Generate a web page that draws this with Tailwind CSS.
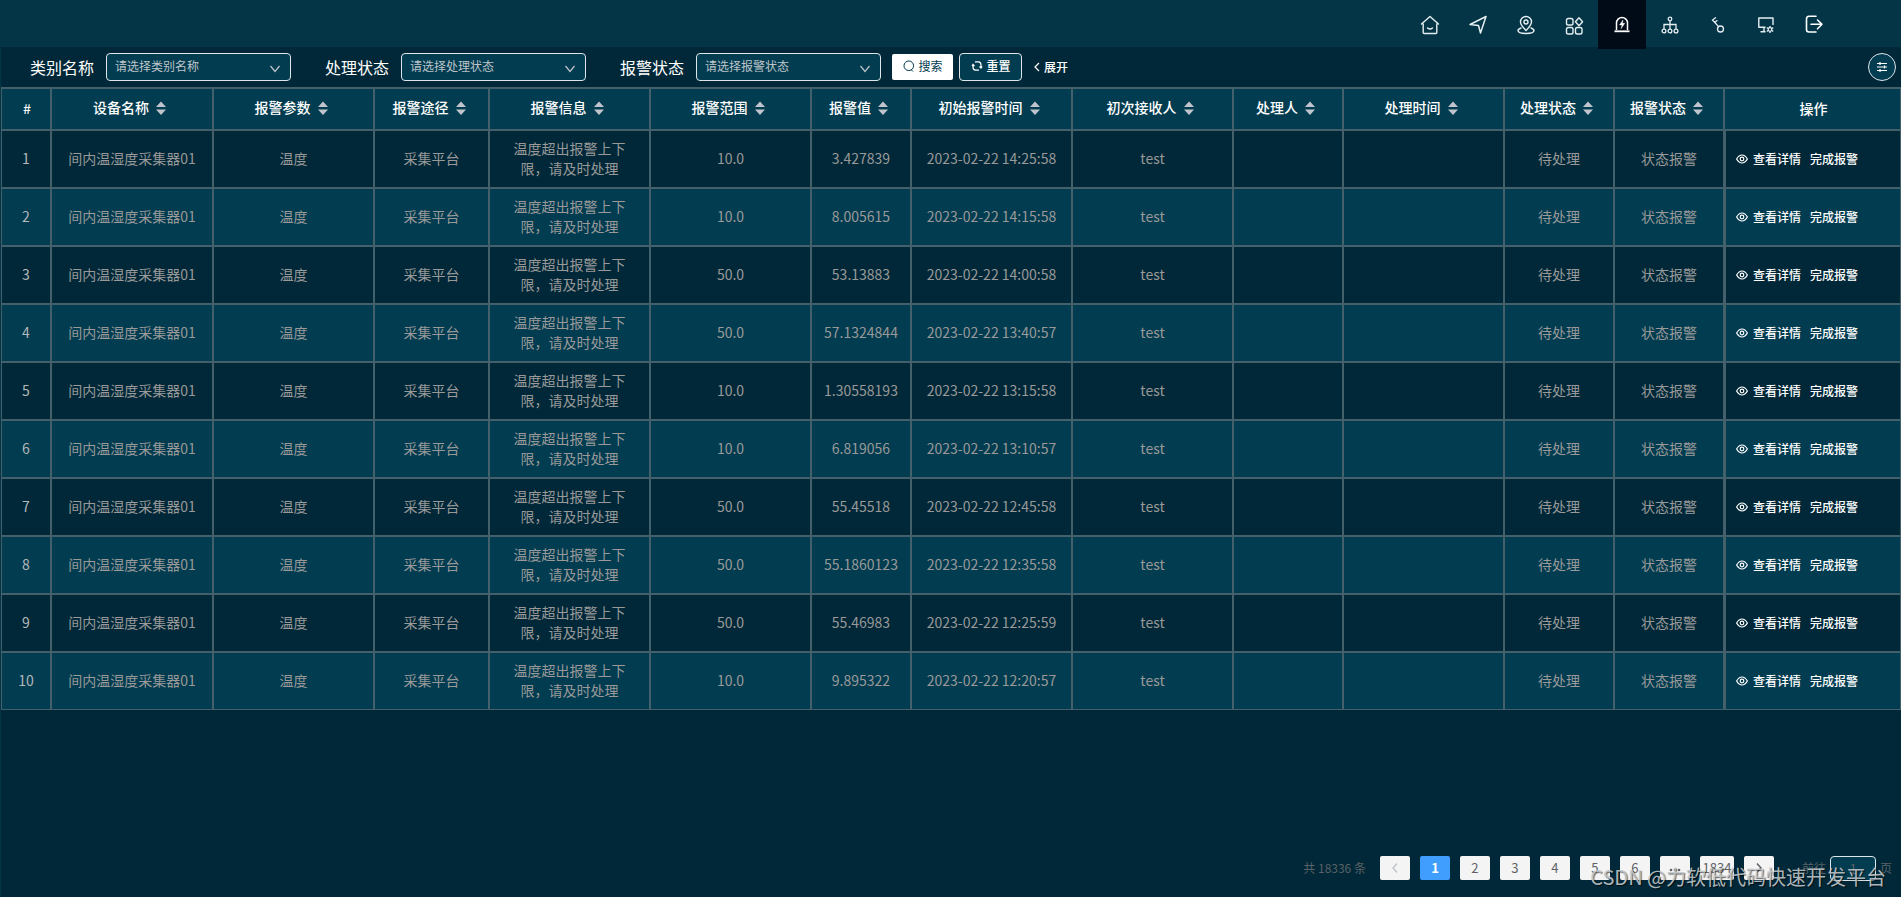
<!DOCTYPE html>
<html lang="zh-CN">
<head>
<meta charset="utf-8">
<title>报警管理</title>
<script src="https://cdn.jsdelivr.net/npm/@tailwindcss/browser@4"></script>
</head>
<body class="flex min-h-screen flex-col bg-[#002838] font-['Noto_Sans_CJK_SC',sans-serif] text-sm text-white">

<header class="flex h-[47px] shrink-0 justify-end bg-[#033547] pr-[63px]">
  <nav class="flex h-[49px]" aria-label="主导航">
    <a href="#" aria-label="首页" class="flex w-12 items-center justify-center"><svg class="size-5" viewBox="0 0 20 20" fill="none" stroke="#e6eef1" stroke-width="1.4" stroke-linejoin="round" stroke-linecap="round"><path d="M3.200 9v8.500q0 1 1 1h11.600q1 0 1-1V9M1.500 9 10 1.500 18.500 9M7.500 13q2.500 2 5 0"/></svg></a>
    <a href="#" aria-label="导航" class="flex w-12 items-center justify-center"><svg class="size-5" viewBox="0 0 20 20" fill="none" stroke="#e6eef1" stroke-width="1.5" stroke-linejoin="round"><path d="M18 1.500 2 9.500l8.500 1L12.500 18z"/></svg></a>
    <a href="#" aria-label="位置" class="flex w-12 items-center justify-center"><svg class="size-5" viewBox="0 0 20 20" fill="none" stroke="#e6eef1" stroke-width="1.4" stroke-linejoin="round" stroke-linecap="round"><path d="M10 15.500C7 12.500 4.500 10 4.500 7a5.500 5.500 0 0 1 11 0c0 3-2.500 5.500-5.500 8.500z"/><circle cx="10" cy="7" r="2"/><path d="M5 13c-2 .7-3 1.600-3 2.600C2 17.300 5.500 18.500 10 18.500s8-1.200 8-2.900c0-1-1-1.900-3-2.600"/></svg></a>
    <a href="#" aria-label="应用" class="flex w-12 items-center justify-center"><svg class="size-5" viewBox="0 0 20 20" fill="none" stroke="#e6eef1" stroke-width="1.4" stroke-linejoin="round"><rect x="2.500" y="3.500" width="6.500" height="6.500" rx="1.800"/><path d="m15 2.700 3.600 4-3.600 4-3.600-4z"/><rect x="2.500" y="12.500" width="6.500" height="6.500" rx="1.800"/><rect x="11.500" y="12.500" width="6.500" height="6.500" rx="1.800"/></svg></a>
    <a href="#" aria-label="报警" aria-current="page" class="flex w-12 items-center justify-center bg-[#000b17]"><svg class="size-5" viewBox="0 0 20 20" fill="none" stroke="#fff" stroke-width="1.500"><path d="M4.500 15V8a5.500 5.500 0 0 1 11 0v7"/><path d="M2.500 16.300h15" stroke-width="1.800"/><path d="M11 5 7.500 9.900H10L9 13.800l3.800-5.500h-2.300z" fill="#fff" stroke-width=".4"/></svg></a>
    <a href="#" aria-label="组织" class="flex w-12 items-center justify-center"><svg class="size-5" viewBox="0 0 20 20" fill="none" stroke="#e6eef1" stroke-width="1.300"><circle cx="10" cy="4" r="1.800"/><circle cx="4" cy="16" r="1.900"/><circle cx="10" cy="16" r="1.900"/><circle cx="16" cy="16" r="1.900"/><path d="M10 6v8M4 14V9.500h12V14"/></svg></a>
    <a href="#" aria-label="权限" class="flex w-12 items-center justify-center"><svg class="size-5" viewBox="0 0 20 20" fill="none" stroke="#e6eef1" stroke-width="1.300" stroke-linecap="round"><circle cx="12.500" cy="14" r="3"/><path d="M10.600 11.600 4.500 5 7.500 2.700M6.800 7.400l2.200-1.800"/></svg></a>
    <a href="#" aria-label="系统设置" class="flex w-12 items-center justify-center"><svg class="size-5" viewBox="0 0 20 20" fill="none" stroke="#e6eef1" stroke-width="1.400" stroke-linejoin="round"><path d="M17 10V3H2.800v9.200h6.700M8 12.500v4M4.500 16.800h5"/><circle cx="14" cy="14.500" r="1.800" stroke-width="1.200"/><path d="M14 11v1.500M14 16.500V18M10.800 12.700l1.300.8M15.900 15.500l1.300.8M10.800 16.300l1.300-.8M15.900 13.500l1.300-.8"/></svg></a>
    <a href="#" aria-label="退出" class="flex w-12 items-center justify-center"><svg class="size-5" viewBox="0 0 20 20" fill="none" stroke="#fff" stroke-width="1.600" stroke-linejoin="round" stroke-linecap="round"><path d="M12 1.300H5Q2.500 1.300 2.500 4v10.500q0 2.500 2.500 2.500h7M7 9.300h11M13.500 5l4.500 4.300-4.500 4.500"/></svg></a>
  </nav>
</header>

<main class="flex grow flex-col border-l border-[#033547]">
  <form class="flex h-10 shrink-0 items-center pr-[5px] pb-px pl-[29px]">
    <label for="category" class="text-base">类别名称</label>
    <span class="relative ml-3 h-7 w-[185px]">
      <select id="category" class="size-full appearance-none rounded border border-[#dfe6e9] bg-[#023c50] px-2 pb-px text-xs text-[#bdc5ca]"><option>请选择类别名称</option></select>
      <svg class="pointer-events-none absolute top-2.5 right-2.5 size-3" viewBox="0 0 12 12" fill="none" stroke="#c0c4cc" stroke-width="1.200"><path d="M1.500 3 6 8.500 10.500 3"/></svg>
    </span>
    <label for="handle" class="ml-[34px] text-base">处理状态</label>
    <span class="relative ml-3 h-7 w-[185px]">
      <select id="handle" class="size-full appearance-none rounded border border-[#dfe6e9] bg-[#023c50] px-2 pb-px text-xs text-[#bdc5ca]"><option>请选择处理状态</option></select>
      <svg class="pointer-events-none absolute top-2.5 right-2.5 size-3" viewBox="0 0 12 12" fill="none" stroke="#c0c4cc" stroke-width="1.200"><path d="M1.500 3 6 8.500 10.500 3"/></svg>
    </span>
    <label for="alarm" class="ml-[34px] text-base">报警状态</label>
    <span class="relative ml-3 h-7 w-[185px]">
      <select id="alarm" class="size-full appearance-none rounded border border-[#dfe6e9] bg-[#023c50] px-2 pb-px text-xs text-[#bdc5ca]"><option>请选择报警状态</option></select>
      <svg class="pointer-events-none absolute top-2.5 right-2.5 size-3" viewBox="0 0 12 12" fill="none" stroke="#c0c4cc" stroke-width="1.200"><path d="M1.500 3 6 8.500 10.500 3"/></svg>
    </span>
    <button type="button" class="ml-[11px] flex h-[26px] w-[61px] items-center justify-center gap-1 rounded-xs bg-white pb-px text-xs text-[#023c50]"><svg class="size-3" viewBox="0 0 12 12" fill="none" stroke="currentColor"><circle cx="5.800" cy="5.800" r="4.800"/><path d="m8 9.500 2 2"/></svg>搜索</button>
    <button type="reset" class="ml-1.5 flex h-7 w-[63px] items-center justify-center gap-1 rounded border border-[#dfe6e9] bg-[#023c50] pb-px text-xs font-medium"><svg class="size-3" viewBox="0 0 12 12" fill="none" stroke="currentColor" stroke-width="1.200"><path d="M4 1.800h3.500Q10 2 10 5v2.500M8 10.200H4.500Q2 10 2 7V4.500M1 6l1-1.500L3.500 6M8.500 6.500 10 8l1.200-1.500"/></svg>重置</button>
    <button type="button" class="ml-3 flex items-center gap-1 text-xs font-medium"><svg class="h-3 w-1.5" viewBox="0 0 6 12" fill="none" stroke="currentColor" stroke-width="1.200"><path d="M5 2 1 6l4 4"/></svg>展开</button>
    <button type="button" aria-label="列设置" class="ml-auto flex size-7 items-center justify-center rounded-full border border-[#dfe6e9] bg-[#023c50]"><svg class="size-3" viewBox="0 0 12 12" fill="none" stroke="#fff" stroke-width="1.200"><path d="M1 2.500h10M1 6h10M1 9.500h10M4 1v3M8.500 4.500v3M4 8v3"/></svg></button>
  </form>

  <table class="w-full table-fixed border-separate border-spacing-0 border-t border-[#43606b] text-center">
    <colgroup>
      <col class="w-[50px]"><col class="w-[162px]"><col class="w-[161px]"><col class="w-[115px]"><col class="w-[161px]"><col class="w-[161px]"><col class="w-[100px]"><col class="w-[161px]"><col class="w-[161px]"><col class="w-[110px]"><col class="w-[161px]"><col class="w-[110px]"><col class="w-[110px]"><col class="w-[177px]">
    </colgroup>
    <thead><tr id="head" class="h-[42px] bg-[#023c50]"></tr></thead>
    <tbody id="rows" class="text-[#999999]"></tbody>
  </table>

  <nav class="mt-auto mb-[17px] flex h-6 items-center justify-end pr-[9px] text-xs text-[#5a6267]" aria-label="分页">
    <span class="mr-3.5">共 18336 条</span>
    <div class="flex gap-2.5 text-[13px] text-[#606266]">
      <button type="button" aria-label="上一页" class="flex h-6 w-[30px] items-center justify-center rounded-xs bg-[#f4f4f5]"><svg class="size-3" viewBox="0 0 12 12" fill="none" stroke="#c0c4cc" stroke-width="1.500"><path d="M8 1.500 4 6l4 4.500"/></svg></button>
      <button type="button" aria-current="page" class="h-6 w-[30px] rounded-xs bg-[#409eff] font-bold text-white">1</button>
      <button type="button" class="h-6 w-[30px] rounded-xs bg-[#f4f4f5]">2</button>
      <button type="button" class="h-6 w-[30px] rounded-xs bg-[#f4f4f5]">3</button>
      <button type="button" class="h-6 w-[30px] rounded-xs bg-[#f4f4f5]">4</button>
      <button type="button" class="h-6 w-[30px] rounded-xs bg-[#f4f4f5]">5</button>
      <button type="button" class="h-6 w-[30px] rounded-xs bg-[#f4f4f5]">6</button>
      <button type="button" aria-label="向后 5 页" class="flex h-6 w-[30px] items-center justify-center rounded-xs bg-[#f4f4f5]"><svg class="size-3" viewBox="0 0 12 12" fill="#606266"><circle cx="2" cy="8" r="1.300"/><circle cx="6" cy="8" r="1.300"/><circle cx="10" cy="8" r="1.300"/></svg></button>
      <button type="button" class="h-6 w-[34px] rounded-xs bg-[#f4f4f5]">1834</button>
      <button type="button" aria-label="下一页" class="flex h-6 w-[30px] items-center justify-center rounded-xs bg-[#f4f4f5]"><svg class="size-3" viewBox="0 0 12 12" fill="none" stroke="#606266" stroke-width="1.500"><path d="m4 1.500 4 4.500-4 4.500"/></svg></button>
    </div>
    <label for="page" class="mr-1 ml-7">前往</label>
    <input id="page" value="1" class="mr-1 h-[25px] w-[46px] rounded border border-[#dfe6e9] bg-[#023c50] text-center text-[13px]">
    <span>页</span>
  </nav>
</main>

<div class="pointer-events-none absolute right-[15px] bottom-1 text-xl leading-8 text-[#c3c9cc]/90 [text-shadow:1px_1px_1px_rgba(0,0,0,0.600)]">CSDN @力软低代码快速开发平台</div>

<template id="sort"><svg class="ml-1.5 inline-block h-4 w-3 align-[-3px]" viewBox="0 0 12 16" fill="#c0c4cc"><path d="M6 1.500 11 7H1zM1 9.500h10L6 15z"/></svg></template>
<template id="eye"><svg class="h-3 w-3" viewBox="0 0 12 12" fill="none" stroke="#fff" stroke-width="1.200"><path d="M.6 6Q3 2 6 2T11.400 6Q9 10 6 10T.6 6z"/><circle cx="6" cy="6" r="1.800"/></svg></template>

<script>
const sort = document.getElementById('sort').innerHTML;
const eye = document.getElementById('eye').innerHTML;
const heads = ['#','设备名称','报警参数','报警途径','报警信息','报警范围','报警值','初始报警时间','初次接收人','处理人','处理时间','处理状态','报警状态','操作'];
const data = [
  ['10.0','3.427839','14:25:58'],
  ['10.0','8.005615','14:15:58'],
  ['50.0','53.13883','14:00:58'],
  ['50.0','57.1324844','13:40:57'],
  ['10.0','1.30558193','13:15:58'],
  ['10.0','6.819056','13:10:57'],
  ['50.0','55.45518','12:45:58'],
  ['50.0','55.1860123','12:35:58'],
  ['50.0','55.46983','12:25:59'],
  ['10.0','9.895322','12:20:57'],
];
document.getElementById('head').innerHTML = heads.map((h, i) =>
  `<th scope="col" class="border border-[#43606b] font-medium ${i > 0 && i < 13 ? 'pr-1 pb-1' : 'pl-0.5 pb-0.5'}">${h}${i > 0 && i < 13 ? sort : ''}</th>`).join('');
document.getElementById('rows').innerHTML = data.map(([range, value, time], i) => {
  const cells = [i + 1, '间内温湿度采集器01', '温度', '采集平台', '温度超出报警上下限，请及时处理', range, value, '2023-02-22 ' + time, 'test', '', '', '待处理', '状态报警'];
  return `<tr class="h-[58px] ${i % 2 ? 'bg-[#023c50]' : 'bg-[#002838]'}">` +
    cells.map((c, k) => `<td class="border border-[#43606b] pb-0.5 ${k === 4 ? 'px-5' : ''} ${k === 0 ? 'text-[#b3b8ba]' : ''}">${c}</td>`).join('') +
    `<td class="border border-l-2 border-[#43606b] pl-2.5"><div class="flex items-center text-xs font-medium text-white"><button type="button" class="mr-[9px] flex items-center gap-[5px]">${eye}查看详情</button><button type="button">完成报警</button></div></td></tr>`;
}).join('');
</script>
</body>
</html>
